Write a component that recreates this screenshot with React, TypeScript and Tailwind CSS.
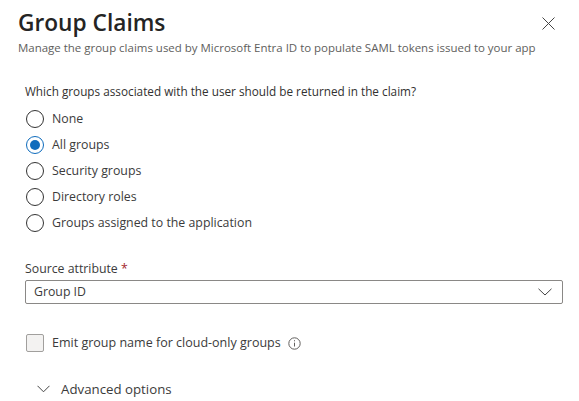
import React from "react";

const options = ["None", "All groups", "Security groups", "Directory roles", "Groups assigned to the application"];

function Radio({ label, checked }: { label: string; checked?: boolean }) {
  return (
    <div className="flex h-[26px] items-center">
      <span className={`flex h-[18px] w-[18px] shrink-0 items-center justify-center rounded-full border ${checked ? "border-[#0f6cbd]" : "border-[#333333]"}`}>
        {checked && <span className="h-[10px] w-[10px] rounded-full bg-[#0f6cbd]" />}
      </span>
      <span className="ml-2 text-[12.35px] text-[#3b3b3b]">{label}</span>
    </div>
  );
}

export default function App() {
  return (
    <div className="h-[401px] w-[579px] overflow-hidden bg-white font-['Open_Sans','Noto_Sans',sans-serif] text-[#323130]">
      <header className="flex items-start justify-between pl-[18px] pr-[24px] pt-[6px]">
        <div>
          <h1 className="text-[22.7px] font-semibold leading-[34px] text-[#242424]">Group Claims</h1>
          <p className="whitespace-nowrap text-[11.48px] leading-[16px] text-[#605e5c]">Manage the group claims used by Microsoft Entra ID to populate SAML tokens issued to your app</p>
        </div>
        <svg className="mt-[11px]" width="13" height="13" viewBox="0 0 13 13" fill="none" stroke="#444" strokeWidth="1">
          <path d="M.5.5l12 12M12.5.5l-12 12" />
        </svg>
      </header>

      <main className="pl-[25px] pr-[16px] pt-[27px]">
        <p className="text-[11.76px] leading-[16px] text-[#323130]">Which groups associated with the user should be returned in the claim?</p>
        <div className="mt-[7px] pl-px">
          {options.map((o) => (
            <Radio key={o} label={o} checked={o === "All groups"} />
          ))}
        </div>

        <label className="mt-[24px] block text-[12.3px] leading-[18px] text-[#3b3b3b]">
          Source attribute <span className="text-[#a4262c]">*</span>
        </label>
        <div className="mt-[2px] flex h-[24px] items-center justify-between rounded-[2px] border border-[#8a8886] pl-2 pr-[10px]">
          <span className="text-[12.3px] text-[#3b3b3b]">Group ID</span>
          <svg width="14" height="8" viewBox="0 0 14 8" fill="none" stroke="#444" strokeWidth="1">
            <path d="M.5.8L7 7l6.5-6.2" />
          </svg>
        </div>

        <div className="ml-px mt-[30px] flex h-[18px] items-center">
          <span className="h-[18px] w-[18px] shrink-0 rounded-[2px] border border-[#a19f9d] bg-[#f3f2f1]" />
          <span className="ml-2 text-[12.52px] text-[#3b3b3b]">Emit group name for cloud-only groups</span>
          <svg className="ml-[7px]" width="13" height="13" viewBox="0 0 13 13" fill="none" stroke="#605e5c" strokeWidth="1">
            <circle cx="6.5" cy="6.5" r="5.7" />
            <path d="M6.5 5.7v3.8M6.5 3.2v1.1" />
          </svg>
        </div>

        <div className="ml-[12px] mt-[28px] flex items-center">
          <svg width="13" height="8" viewBox="0 0 13 8" fill="none" stroke="#444" strokeWidth="1">
            <path d="M.5.8L6.5 6.8l6-6" />
          </svg>
          <span className="ml-[11px] text-[13.28px] leading-[18px] text-[#3b3b3b]">Advanced options</span>
        </div>
      </main>
    </div>
  );
}
